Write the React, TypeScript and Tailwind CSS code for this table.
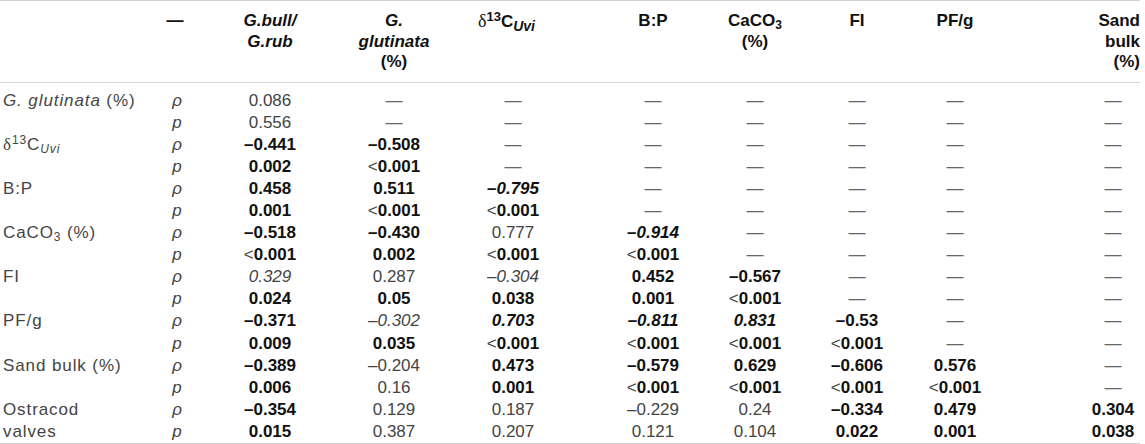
import React from "react";

type Cell = string;

const rows: { label: React.ReactNode; stat: "ρ" | "p"; cells: Cell[] }[] = [
  {
    label: (
      <>
        <i>G. glutinata</i> (%)
      </>
    ),
    stat: "ρ",
    cells: ["n:0.086", "-", "-", "-", "-", "-", "-", "-"],
  },
  { label: null, stat: "p", cells: ["n:0.556", "-", "-", "-", "-", "-", "-", "-"] },
  {
    label: (
      <>
        <span className="font-['Liberation_Serif',serif]">δ</span>
        <sup className="text-[12px]">13</sup>C<sub className="text-[12px] italic">Uvi</sub>
      </>
    ),
    stat: "ρ",
    cells: ["b:–0.441", "b:–0.508", "-", "-", "-", "-", "-", "-"],
  },
  { label: null, stat: "p", cells: ["b:0.002", "b:<0.001", "-", "-", "-", "-", "-", "-"] },
  { label: "B:P", stat: "ρ", cells: ["b:0.458", "b:0.511", "bi:–0.795", "-", "-", "-", "-", "-"] },
  { label: null, stat: "p", cells: ["b:0.001", "b:<0.001", "b:<0.001", "-", "-", "-", "-", "-"] },
  {
    label: (
      <>
        CaCO<sub className="text-[12px]">3</sub> (%)
      </>
    ),
    stat: "ρ",
    cells: ["b:–0.518", "b:–0.430", "n:0.777", "bi:–0.914", "-", "-", "-", "-"],
  },
  { label: null, stat: "p", cells: ["b:<0.001", "b:0.002", "b:<0.001", "b:<0.001", "-", "-", "-", "-"] },
  { label: "FI", stat: "ρ", cells: ["i:0.329", "n:0.287", "i:–0.304", "b:0.452", "b:–0.567", "-", "-", "-"] },
  { label: null, stat: "p", cells: ["b:0.024", "b:0.05", "b:0.038", "b:0.001", "b:<0.001", "-", "-", "-"] },
  {
    label: "PF/g",
    stat: "ρ",
    cells: ["b:–0.371", "i:–0.302", "bi:0.703", "bi:–0.811", "bi:0.831", "b:–0.53", "-", "-"],
  },
  {
    label: null,
    stat: "p",
    cells: ["b:0.009", "b:0.035", "b:<0.001", "b:<0.001", "b:<0.001", "b:<0.001", "-", "-"],
  },
  {
    label: "Sand bulk (%)",
    stat: "ρ",
    cells: ["b:–0.389", "n:–0.204", "b:0.473", "b:–0.579", "b:0.629", "b:–0.606", "b:0.576", "-"],
  },
  {
    label: null,
    stat: "p",
    cells: ["b:0.006", "n:0.16", "b:0.001", "b:<0.001", "b:<0.001", "b:<0.001", "b:<0.001", "-"],
  },
  {
    label: "Ostracod",
    stat: "ρ",
    cells: ["b:–0.354", "n:0.129", "n:0.187", "n:–0.229", "n:0.24", "b:–0.334", "b:0.479", "b:0.304"],
  },
  {
    label: "valves",
    stat: "p",
    cells: ["b:0.015", "n:0.387", "n:0.207", "n:0.121", "n:0.104", "b:0.022", "b:0.001", "b:0.038"],
  },
];

// padding per value column so each column's centre lands where the picture has it
const pads = ["pr-[16px]", "pl-[2px]", "pr-[11px]", "pl-[19px]", "", "pl-[2px]", "pr-[30px]", "pl-[52px]"];

const grid =
  "grid grid-cols-[140px_84px_108px_122px_129px_121px_102px_100px_128px_106px] w-[1140px]";

const Value = ({ cell }: { cell: Cell }) => {
  if (cell === "-") return <span className="text-[#666]">—</span>;
  const [style, raw] = cell.split(":");
  const bold = style.includes("b");
  const italic = style.includes("i");
  const lt = raw.startsWith("<");
  const text = lt ? raw.slice(1) : raw;
  return (
    <>
      {lt && <span className="text-[#444]">&lt;</span>}
      <span className={(bold ? "font-bold text-[#111] " : "text-[#444] ") + (italic ? "italic" : "")}>
        {text}
      </span>
    </>
  );
};

const App = () => {
  return (
    <div className="w-[1145px] h-[444px] bg-white font-['Liberation_Sans',Arial,sans-serif] text-[17px]">
      <div
        className={
          grid +
          " border-t border-b border-[#d4d4d4] pt-[10px] pb-[9px] font-bold text-[#111] leading-[20.5px] text-center"
        }
      >
        <div></div>
        <div className="pr-[14px]">—</div>
        <div className={"italic " + pads[0]}>
          G.bull/
          <br />
          G.rub
        </div>
        <div className={pads[1]}>
          <i>G.</i>
          <br />
          <i>glutinata</i>
          <br />
          (%)
        </div>
        <div className="pr-[24px] whitespace-nowrap">
          <span className="font-['Liberation_Serif',serif] font-normal text-[18px]">δ</span>
          <sup className="text-[13px]">13</sup>C<sub className="text-[14px] italic">Uvi</sub>
        </div>
        <div className={pads[3]}>B:P</div>
        <div className={pads[4]}>
          CaCO<sub className="text-[12px]">3</sub>
          <br />
          (%)
        </div>
        <div className={pads[5]}>FI</div>
        <div className={pads[6]}>PF/g</div>
        <div className="text-right">
          Sand
          <br />
          bulk
          <br />
          (%)
        </div>
      </div>
      <div className={grid + " border-b-2 border-[#d4d4d4] pt-[7px] leading-[22.1px] text-[#444]"}>
        {rows.map((row, i) => (
          <React.Fragment key={i}>
            <div className="pl-[3px] whitespace-nowrap tracking-[0.9px]">{row.label}</div>
            <div className="text-center italic pr-[10px]">{row.stat}</div>
            {row.cells.map((c, j) => (
              <div key={j} className={"text-center whitespace-nowrap " + pads[j]}>
                <Value cell={c} />
              </div>
            ))}
          </React.Fragment>
        ))}
      </div>
    </div>
  );
};

export default App;
